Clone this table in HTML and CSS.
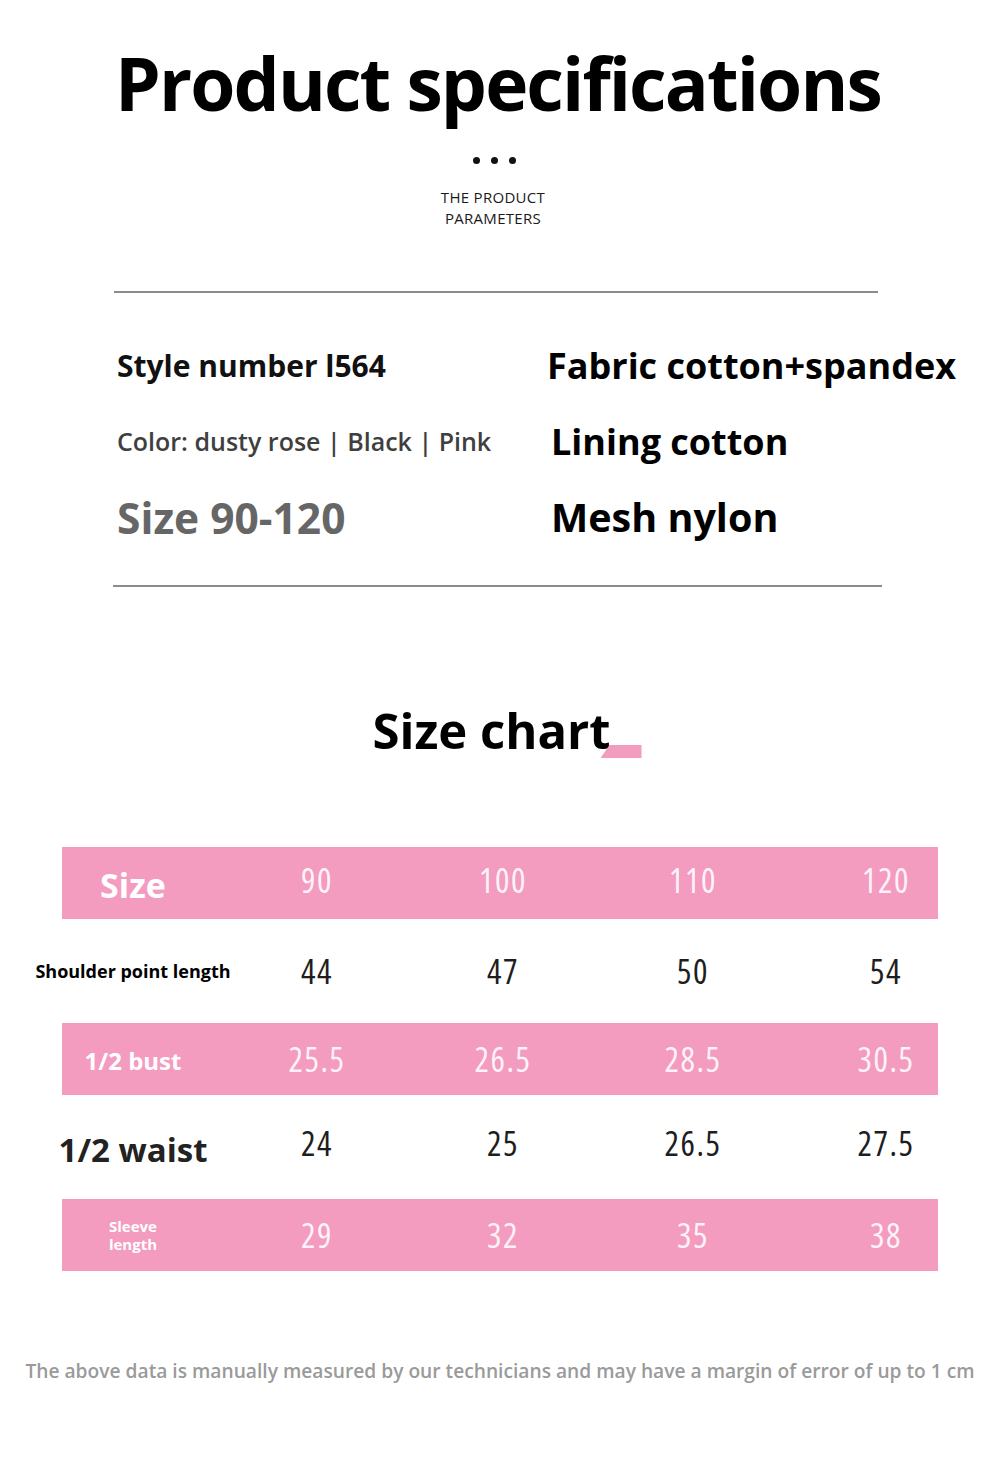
FILE: index.html
```html
<!DOCTYPE html>
<html lang="en">
<head>
<meta charset="utf-8">
<title>Product specifications</title>
<link rel="stylesheet" href="styles.css">
</head>
<body>
<div class="page">
  <header class="hero">
    <h1 class="hero-title">Product specifications</h1>
    <div class="dots"><span></span><span></span><span></span></div>
    <p class="hero-sub">THE PRODUCT<br>PARAMETERS</p>
  </header>

  <hr class="rule rule-top">

  <section class="specs">
    <div class="spec spec-style">Style number l564</div>
    <div class="spec spec-fabric">Fabric cotton+spandex</div>
    <div class="spec spec-color">Color: dusty rose | Black | Pink</div>
    <div class="spec spec-lining">Lining cotton</div>
    <div class="spec spec-size">Size 90-120</div>
    <div class="spec spec-mesh">Mesh nylon</div>
  </section>

  <hr class="rule rule-bottom">

  <h2 class="chart-title"><span class="chart-text">Size chart</span><span class="chart-mark"></span></h2>

  <div class="chart">
    <div class="row row-pink row-head">
      <div class="label label-size">Size</div>
      <div class="cell">90</div><div class="cell">100</div><div class="cell">110</div><div class="cell cell-last">120</div>
    </div>
    <div class="row row-white row-shoulder">
      <div class="label label-shoulder">Shoulder point length</div>
      <div class="cell">44</div><div class="cell">47</div><div class="cell">50</div><div class="cell cell-last">54</div>
    </div>
    <div class="row row-pink">
      <div class="label label-bust">1/2 bust</div>
      <div class="cell">25.5</div><div class="cell">26.5</div><div class="cell">28.5</div><div class="cell cell-last">30.5</div>
    </div>
    <div class="row row-white row-waist">
      <div class="label label-waist">1/2 waist</div>
      <div class="cell">24</div><div class="cell">25</div><div class="cell">26.5</div><div class="cell cell-last">27.5</div>
    </div>
    <div class="row row-pink">
      <div class="label label-sleeve">Sleeve<br>length</div>
      <div class="cell">29</div><div class="cell">32</div><div class="cell">35</div><div class="cell cell-last">38</div>
    </div>
  </div>

  <p class="note">The above data is manually measured by our technicians and may have a margin of error of up to 1 cm</p>
</div>
</body>
</html>
```

FILE: styles.css
```css
html, body {
  margin: 0;
  padding: 0;
  background: #ffffff;
}

.page {
  width: 1000px;
  height: 1478px;
  font-family: "Open Sans", "Noto Sans", sans-serif;
  color: #000;
  overflow: hidden;
}

.hero {
  display: flex;
  flex-direction: column;
  align-items: center;
  padding-top: 38px;
}

.hero-title {
  margin: 0;
  font-size: 73px;
  font-weight: 700;
  letter-spacing: -1.9px;
  line-height: 90px;
  padding-right: 4px;
}

.dots {
  display: flex;
  gap: 11px;
  margin-top: 29px;
  margin-left: -12px;
}

.dots span {
  width: 7px;
  height: 7px;
  border-radius: 50%;
  background: #111;
}

.hero-sub {
  margin: 23px 0 0 -14px;
  font-size: 15px;
  line-height: 21px;
  font-weight: 400;
  letter-spacing: 0.3px;
  text-align: center;
  color: #1a1a1a;
}

.rule {
  border: 0;
  height: 2px;
  background: #8c8c8c;
}

.rule-top {
  margin: 62px 122px 0 114px;
}

.specs {
  display: grid;
  grid-template-columns: 430px 1fr;
  grid-template-rows: 76px 76px 76px;
  padding: 34px 0 0 117px;
  align-items: center;
}

.spec {
  font-weight: 700;
  white-space: nowrap;
}

.spec-style {
  font-size: 30px;
  color: #111;
}

.spec-fabric {
  font-size: 36px;
  color: #000;
}

.spec-color {
  font-size: 25px;
  font-weight: 600;
  color: #3f3f3f;
}

.spec-lining {
  font-size: 36px;
  padding-left: 4px;
  color: #000;
}

.spec-mesh {
  font-size: 39.5px;
  padding-left: 4px;
  color: #000;
}

.spec-size {
  font-size: 42.5px;
  color: #666;
}

.rule-bottom {
  margin: 30px 118px 0 113px;
}

.chart-title {
  display: flex;
  justify-content: center;
  align-items: flex-end;
  margin: 113px 0 0 0;
  padding-left: 14px;
  font-size: 49px;
  font-weight: 700;
  line-height: 60px;
}

.chart-mark {
  width: 41px;
  height: 13px;
  margin: 0 0 2px -10px;
  background: #f29cc0;
  clip-path: polygon(22% 0, 100% 0, 100% 100%, 0 100%);
}

.chart {
  margin-top: 87px;
}

.row {
  display: grid;
  grid-template-columns: 142px 226px 146px 234px 128px;
  align-items: center;
  margin: 0 62px;
}

.row-pink {
  height: 72px;
  background: #f39cc0;
  color: rgba(255, 255, 255, 0.88);
}

.row-white {
  height: 104px;
  color: #1e1e1e;
}

.label {
  font-weight: 700;
  text-align: center;
  white-space: nowrap;
}

.label-size {
  font-size: 34px;
  color: #fff;
  padding-top: 4px;
}

.label-shoulder {
  font-size: 18px;
  color: #000;
  margin: 0 -60px;
}

.label-bust {
  font-size: 24px;
  color: #fff;
  padding-top: 2px;
}

.label-waist {
  font-size: 33px;
  color: #222;
  margin: 0 -30px;
  padding-top: 4px;
}

.label-sleeve {
  font-size: 15px;
  line-height: 18px;
  color: #fff;
}

.cell {
  text-align: center;
  font-size: 34px;
  font-weight: 400;
  font-stretch: 87.5%;
  letter-spacing: 1.5px;
}

.row-head .cell {
  padding-bottom: 6px;
}

.row-waist .cell {
  padding-bottom: 8px;
}

.cell-last {
  padding-left: 24px;
}

.note {
  margin: 86px 0 0 0;
  text-align: center;
  font-size: 19.2px;
  font-weight: 600;
  color: #9a9a9a;
  white-space: nowrap;
}
```
